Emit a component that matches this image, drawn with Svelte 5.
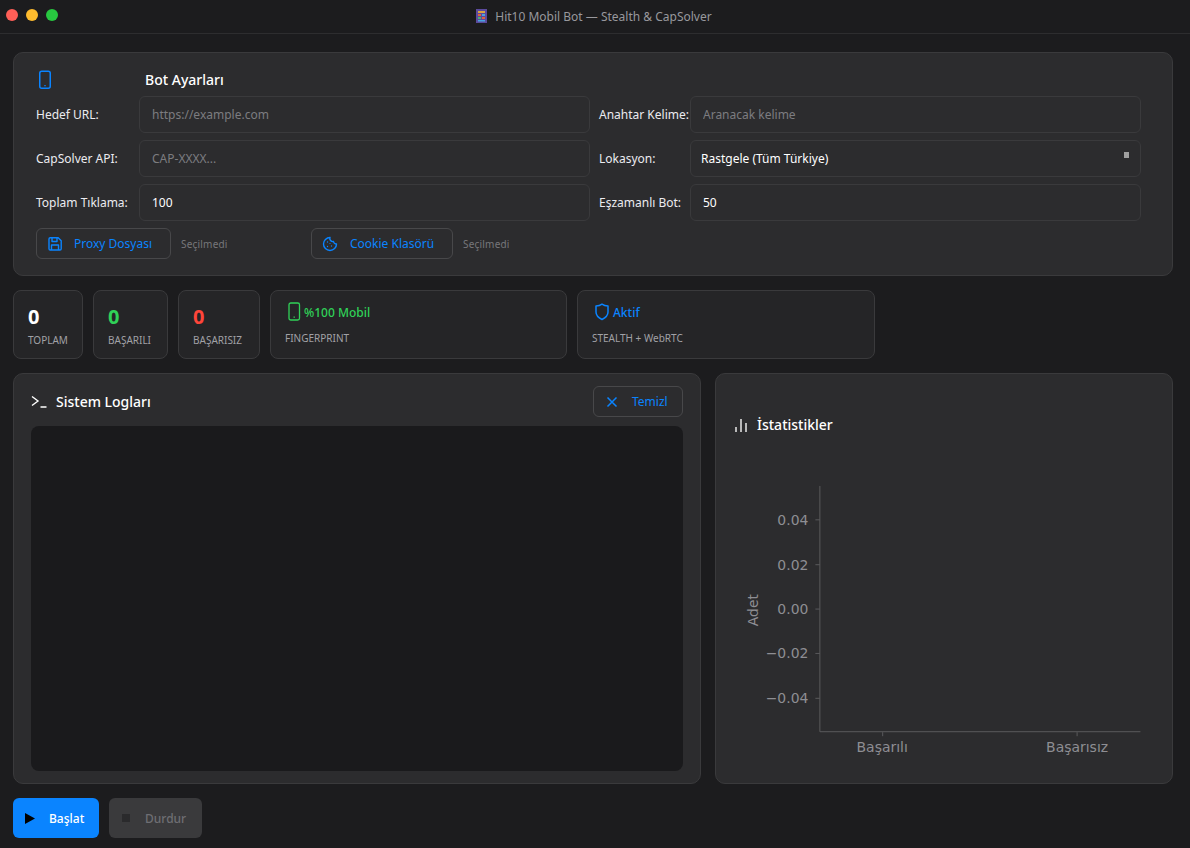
<script>
  const rows = [
    { l: 'Hedef URL:', ph: 'https://example.com', v: '', l2: 'Anahtar Kelime:', ph2: 'Aranacak kelime', v2: '' },
    { l: 'CapSolver API:', ph: 'CAP-XXXX...', v: '', l2: 'Lokasyon:', select: true },
    { l: 'Toplam Tıklama:', ph: '', v: '100', l2: 'Eşzamanlı Bot:', ph2: '', v2: '50' }
  ];
  const yTicks = [
    { y: 520, t: '0.04' },
    { y: 565, t: '0.02' },
    { y: 609.5, t: '0.00' },
    { y: 654, t: '−0.02' },
    { y: 699, t: '−0.04' }
  ];
</script>

<div class="window">
  <header class="titlebar">
    <div class="lights"><i class="red"></i><i class="yellow"></i><i class="green"></i></div>
    <div class="wintitle">
      <svg width="11" height="14" viewBox="0 0 11 14"><rect width="11" height="14" fill="#5b4a9c"/><rect x="2" y="2" width="7" height="2" fill="#d9a441"/><rect x="2" y="5" width="3" height="2" fill="#e0603f"/><rect x="6" y="5" width="3" height="2" fill="#4aa3df"/><rect x="2" y="8" width="3" height="2" fill="#4caf6e"/><rect x="6" y="8" width="3" height="2" fill="#e0603f"/><rect x="2" y="11" width="7" height="1.5" fill="#4aa3df"/></svg>
      <span>Hit10 Mobil Bot — Stealth &amp; CapSolver</span>
    </div>
  </header>

  <main class="content">
    <section class="card settings">
      <div class="settings-head">
        <svg class="phone" width="14" height="20" viewBox="0 0 14 20" fill="none" stroke="#0a84ff" stroke-width="1.5"><rect x="1.75" y="1.25" width="10.5" height="17" rx="2"/><path d="M6.3 15.6h1.4" stroke-width="1.4"/></svg>
        <h2>Bot Ayarları</h2>
      </div>
      <div class="form">
        {#each rows as r}
          <label class="lbl" for={r.l}>{r.l}</label>
          <input id={r.l} class="field" placeholder={r.ph} value={r.v} />
          <label class="lbl lbl2" for={r.l2}>{r.l2}</label>
          {#if r.select}
            <div id={r.l2} class="field select">Rastgele (Tüm Türkiye)<i class="caret"></i></div>
          {:else}
            <input id={r.l2} class="field" placeholder={r.ph2} value={r.v2} />
          {/if}
        {/each}
      </div>
      <div class="files">
        <button class="ghost proxy">
          <svg width="16" height="16" viewBox="0 0 16 16" fill="none" stroke="#0a84ff" stroke-width="1.4" stroke-linejoin="round"><path d="M2 3a1.2 1.2 0 0 1 1.2-1.2h8L14.2 4.8v8a1.2 1.2 0 0 1-1.2 1.2H3.2A1.2 1.2 0 0 1 2 12.800z"/><path d="M5 2v3.500h5V2M4.500 14V9h7v5"/></svg>
          <span>Proxy Dosyası</span>
        </button>
        <span class="none first">Seçilmedi</span>
        <button class="ghost cookie">
          <svg width="16" height="16" viewBox="0 0 16 16" fill="none" stroke="#0a84ff" stroke-width="1.4" stroke-linejoin="round"><path d="M8 1.500a6.500 6.500 0 1 0 6.500 6.500 3 3 0 0 1-3-2.500 3 3 0 0 1-3.500-4z"/><circle cx="5.500" cy="6" r=".7" fill="#0a84ff" stroke="none"/><circle cx="5.500" cy="10.500" r=".7" fill="#0a84ff" stroke="none"/><circle cx="9.500" cy="10" r=".7" fill="#0a84ff" stroke="none"/><circle cx="8" cy="7.500" r=".6" fill="#0a84ff" stroke="none"/></svg>
          <span>Cookie Klasörü</span>
        </button>
        <span class="none">Seçilmedi</span>
      </div>
    </section>

    <section class="stats">
      <div class="stat s1"><b>0</b><small>TOPLAM</small></div>
      <div class="stat s2"><b class="ok">0</b><small>BAŞARILI</small></div>
      <div class="stat s3"><b class="bad">0</b><small>BAŞARISIZ</small></div>
      <div class="stat wide">
        <div class="wide-top ok">
          <svg width="14" height="20" viewBox="0 0 14 20" fill="none" stroke="#30d158" stroke-width="1.3"><rect x="2" y="1" width="10.500" height="17" rx="1.800"/><path d="M6.500 15.200h1.400"/></svg>
          <span>%100 Mobil</span>
        </div>
        <small>FINGERPRINT</small>
      </div>
      <div class="stat wide">
        <div class="wide-top blue">
          <svg width="16" height="18" viewBox="0 0 16 18" fill="none" stroke="#0a84ff" stroke-width="1.500" stroke-linejoin="round"><path d="M8 1.200c1.800 1.300 3.800 1.800 6 1.900v6c0 3.400-2.400 5.700-6 7.400-3.600-1.700-6-4-6-7.400v-6c2.200-.1 4.200-.6 6-1.900z"/></svg>
          <span>Aktif</span>
        </div>
        <small>STEALTH + WebRTC</small>
      </div>
    </section>

    <section class="panels">
      <div class="card logs">
        <div class="logs-head">
          <svg width="16" height="14" viewBox="0 0 16 14" fill="none" stroke="#fff" stroke-width="1.400"><path d="M1 1.500 7 6 1 10.500M9.500 12H15.500"/></svg>
          <h3>Sistem Logları</h3>
          <button class="ghost clear">
            <svg width="12" height="12" viewBox="0 0 12 12" fill="none" stroke="#0a84ff" stroke-width="1.500"><path d="M1.500 1.500l9 9M10.500 1.500l-9 9"/></svg>
            <span>Temizl</span>
          </button>
        </div>
        <div class="logbox"></div>
      </div>

      <div class="card chart">
        <div class="chart-head">
          <svg width="14" height="14" viewBox="0 0 14 14" fill="none" stroke="#e8e8e8" stroke-width="1.500"><path d="M2 9v5M7 1v13M12 5v9"/></svg>
          <h3>İstatistikler</h3>
        </div>
        <svg class="plot" width="456" height="320" viewBox="716 464 456 320">
          <g stroke="#5a5a5c" stroke-width="1" fill="none">
            <path d="M819.500 486V732.500H1141"/>
            {#each yTicks as t}<path d="M815 {t.y}h4.500"/>{/each}
            <path d="M882.500 733v4M1077.500 733v4"/>
          </g>
          <g class="plot-text">
            {#each yTicks as t}<text x="808" y={t.y + 5} text-anchor="end">{t.t}</text>{/each}
            <text x="882" y="753" text-anchor="middle">Başarılı</text>
            <text x="1077.500" y="753" text-anchor="middle">Başarısız</text>
            <text transform="translate(757 610.500) rotate(-90)" text-anchor="middle">Adet</text>
          </g>
        </svg>
      </div>
    </section>

    <footer class="actions">
      <button class="primary">
        <svg width="10" height="11" viewBox="0 0 10 11"><path d="M0 0l10 5.500L0 11z" fill="#000"/></svg>
        <span>Başlat</span>
      </button>
      <button class="disabled">
        <svg width="8" height="8" viewBox="0 0 8 8"><rect width="8" height="8" fill="#2a2a2c"/></svg>
        <span>Durdur</span>
      </button>
    </footer>
  </main>
</div>

<style>
  :global(body) { margin: 0; background: #1c1c1e; }
  .window {
    width: 1190px; height: 848px; overflow: hidden;
    background: #1c1c1e; color: #fff;
    font-family: "Noto Sans", "Open Sans", sans-serif; font-size: 12px;
    display: flex; flex-direction: column;
  }
  .titlebar {
    height: 33px; flex: none; position: relative;
    border-bottom: 1px solid #2d2d2f;
    display: flex; align-items: center; justify-content: center;
  }
  .lights { position: absolute; left: 6px; top: 9px; display: flex; gap: 8px; }
  .lights i { width: 12px; height: 12px; border-radius: 50%; display: block; }
  .red { background: #ff5f57; } .yellow { background: #febc2e; } .green { background: #28c840; }
  .wintitle { display: flex; align-items: center; gap: 8px; color: #98989d; font-size: 12px; margin-top: -1px; margin-left: -2px; }

  .content { flex: 1; padding: 18px 17px 10px 13px; display: flex; flex-direction: column; min-height: 0; }
  .card { background: #2c2c2e; border: 1px solid #3a3a3c; border-radius: 10px; box-sizing: border-box; }

  .settings { height: 224px; padding: 17px 22px 0; }
  .settings-head { display: flex; align-items: center; height: 20px; }
  .phone { margin-left: 2px; flex: none; }
  h2 { margin: 0 0 0 93px; font-size: 14px; font-weight: 500; line-height: 20px; position: relative; top: 0; }
  .form {
    display: grid; grid-template-columns: 103px 451px 100px 451px;
    grid-auto-rows: 37px; row-gap: 7px; margin-top: 6px; align-items: center;
  }
  .lbl { color: #ebebf0; font-size: 12px; }
  .lbl2 { padding-left: 9px; }
  .field {
    box-sizing: border-box; height: 37px; width: 100%;
    background: #2c2c2e; border: 1px solid #3a3a3c; border-radius: 6px;
    color: #fff; font: inherit; font-size: 12px; padding: 0 12px; outline: none;
  }
  .field::placeholder { color: #7c7c80; opacity: 1; }
  .select { display: flex; align-items: center; padding-left: 10px; position: relative; }
  .caret { position: absolute; right: 11px; top: 11px; width: 5px; height: 6px; background: #a0a0a0; }

  .files { display: flex; align-items: center; margin-top: 7px; height: 31px; }
  .ghost {
    display: flex; align-items: center; box-sizing: border-box;
    background: transparent; border: 1px solid #48484a; border-radius: 6px;
    color: #0a84ff; font: inherit; font-size: 12px; height: 31px; padding: 0;
  }
  .proxy { width: 135px; padding-left: 10px; gap: 11px; }
  .cookie { width: 142px; padding-left: 10px; gap: 12px; }
  .none { color: #77777b; font-size: 10px; margin-left: 10px; letter-spacing: .2px; }
  .first { width: 130px; }

  .stats { display: flex; gap: 10px; margin-top: 14px; height: 69px; }
  .stat {
    box-sizing: border-box; background: #252527; border: 1px solid #3a3a3c; border-radius: 8px;
    display: flex; flex-direction: column; padding: 13px 14px 0;
  }
  .stat b { font-size: 20px; line-height: 26px; font-weight: 700; }
  .stat small { font-size: 10px; color: #a1a1a6; line-height: 14px; margin-top: 3px; }
  .s1 { width: 70px; } .s2 { width: 75px; } .s3 { width: 82px; }
  .ok { color: #30d158; } .bad { color: #ff453a; } .blue { color: #0a84ff; }
  .wide { width: 297px; padding: 11px 14px 0; }
  .wide + .wide { width: 298px; }
  .wide-top { display: flex; align-items: center; gap: 3px; font-size: 12px; font-weight: 500; height: 20px; margin-left: 2px; }
  .wide small { margin-top: 9px; }

  .panels { display: flex; gap: 14px; margin-top: 14px; height: 411px; }
  .logs { width: 688px; padding: 12px 17px 12px 17px; display: flex; flex-direction: column; }
  .logs-head { display: flex; align-items: center; height: 31px; }
  .logs-head svg:first-child { flex: none; }
  h3 { margin: 0 0 0 9px; font-size: 14px; font-weight: 500; flex: 1; }
  .clear { width: 90px; padding-left: 12px; gap: 14px; flex: none; }
  .logbox { flex: 1; margin-top: 9px; background: #1a1a1c; border-radius: 8px; }
  .chart { width: 458px; display: flex; flex-direction: column; }
  .chart-head { display: flex; align-items: center; margin: 41px 0 0 18px; height: 20px; }
  .plot { display: block; margin-top: 29px; }
  .plot-text text { font-family: "DejaVu Sans", sans-serif; font-size: 14px; fill: #8e8e93; }

  .actions { display: flex; gap: 10px; margin-top: 14px; }
  .actions button {
    height: 40px; border: none; border-radius: 6px; font: inherit; font-size: 12px; font-weight: 500;
    display: flex; align-items: center; padding: 0;
  }
  .primary { width: 86px; background: #0a84ff; color: #fff; padding-left: 12px !important; gap: 14px; }
  .disabled { width: 93px; background: #3a3a3c; color: #6e6e73; padding-left: 13px !important; gap: 15px; }
</style>
